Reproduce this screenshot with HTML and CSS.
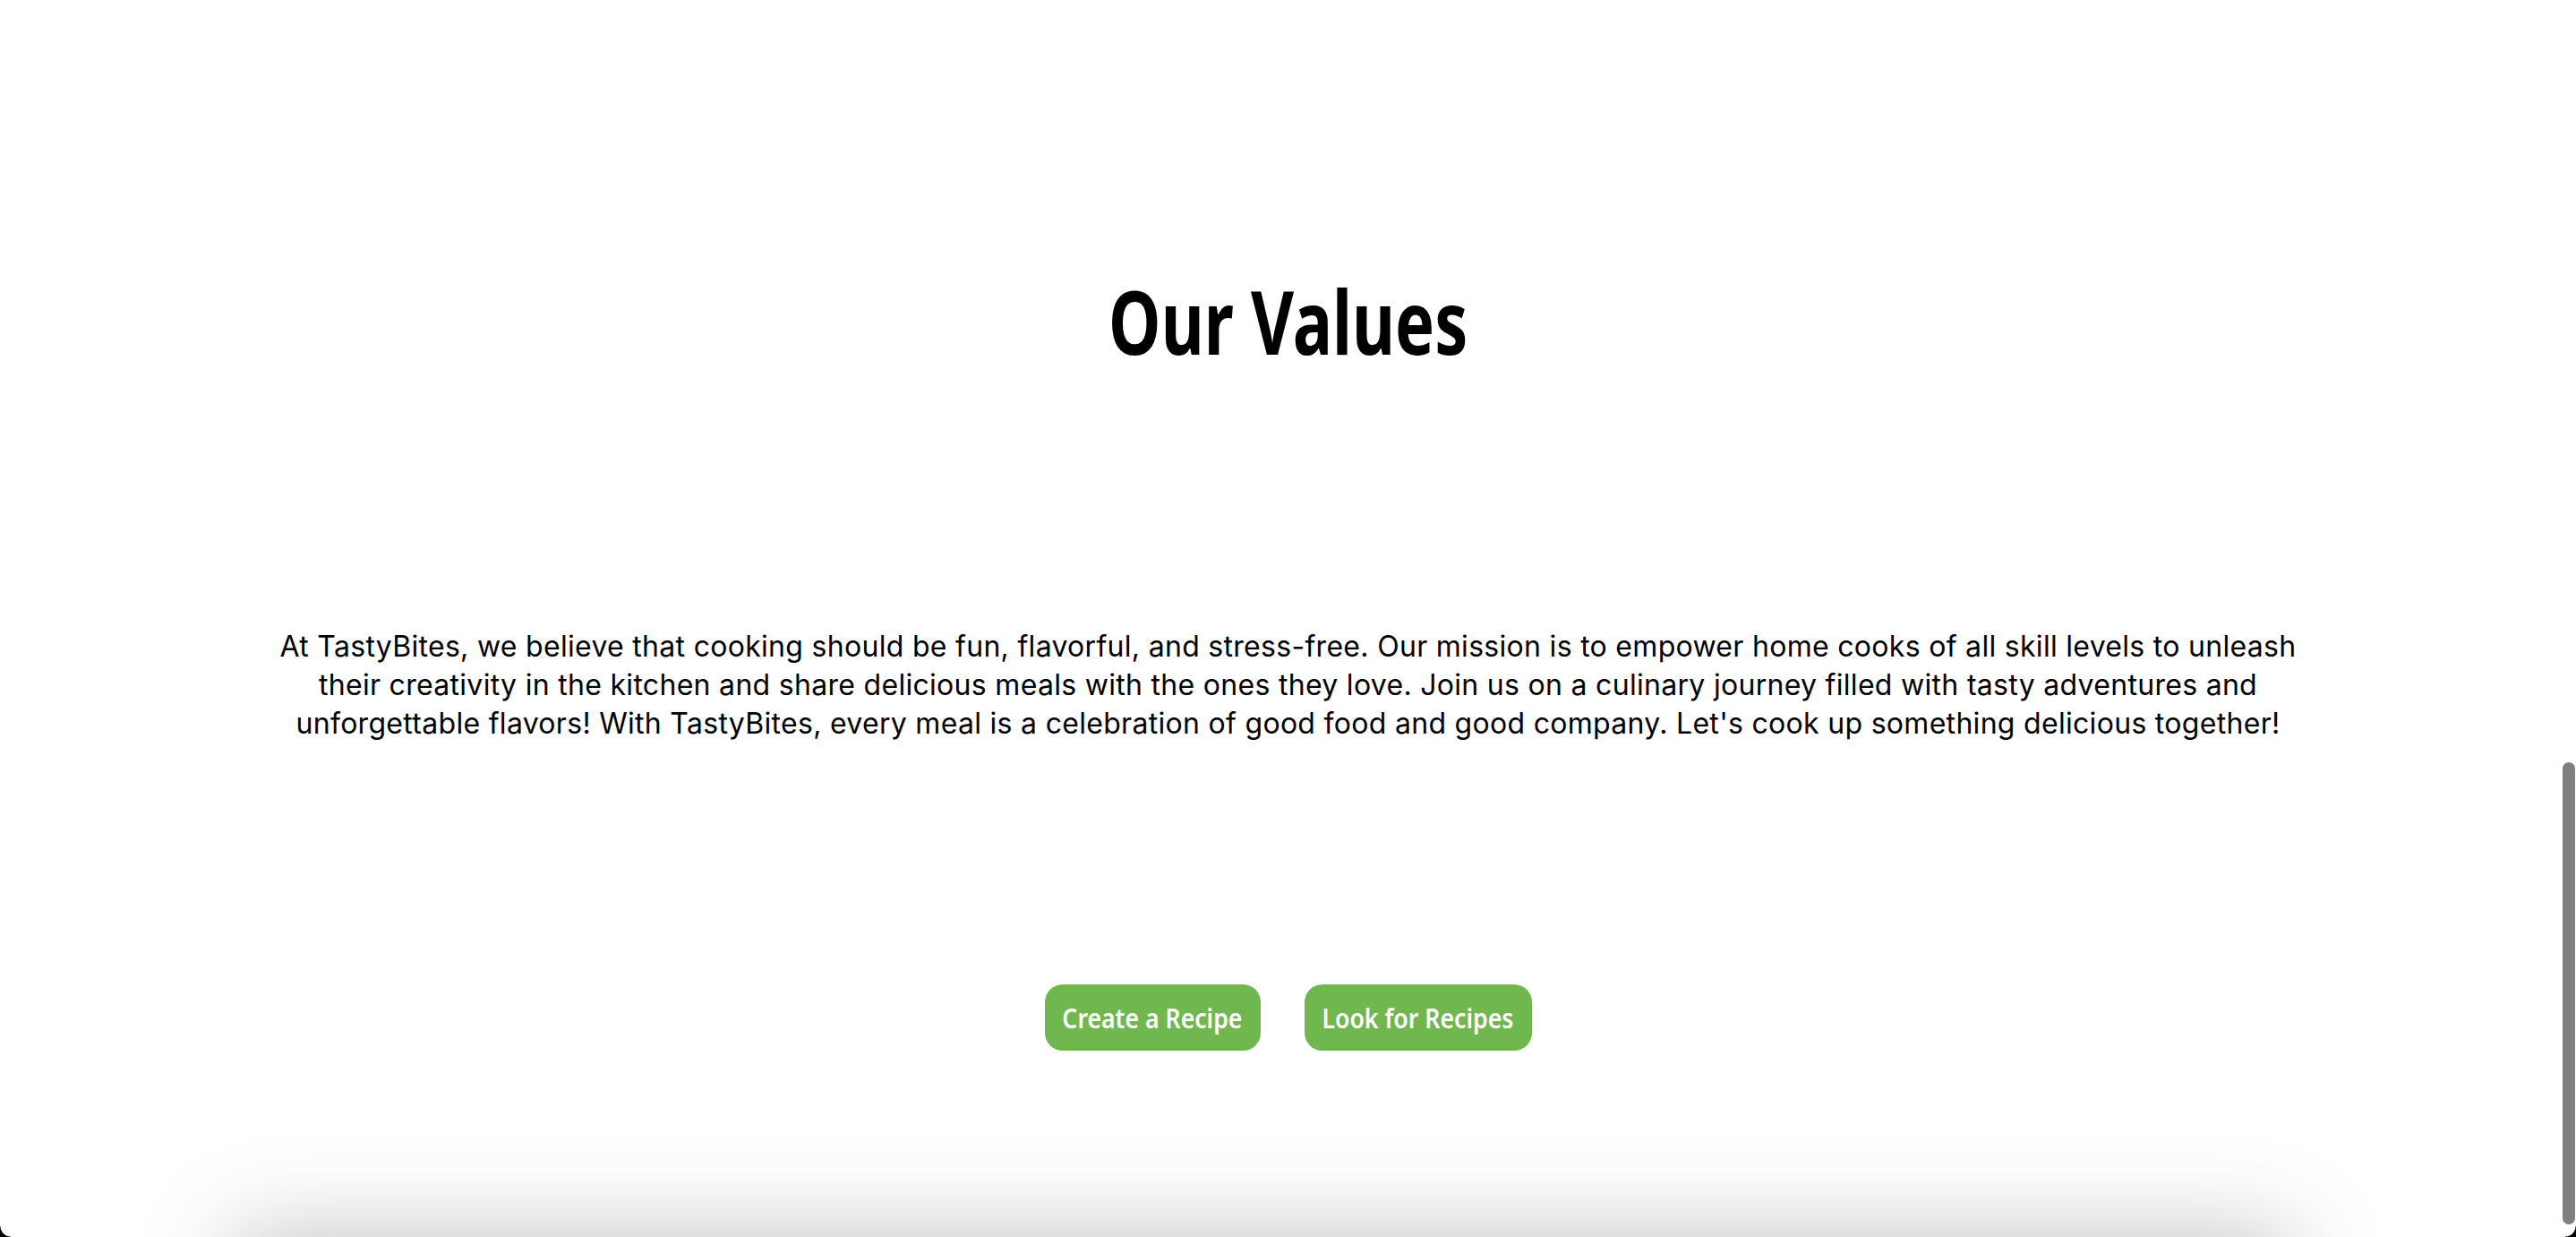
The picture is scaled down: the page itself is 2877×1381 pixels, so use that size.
FILE: index.html
```html
<!DOCTYPE html>
<html lang="en">
<head>
<meta charset="utf-8">
<title>Our Values - TastyBites</title>
<link rel="stylesheet" href="styles.css">
</head>
<body>
<div class="page">
  <section class="values">
    <h1 class="values-title">Our Values</h1>
    <p class="values-text">At TastyBites, we believe that cooking should be fun, flavorful, and stress-free. Our mission is to empower home cooks of all skill levels to unleash their creativity in the kitchen and share delicious meals with the ones they love. Join us on a culinary journey filled with tasty adventures and unforgettable flavors! With TastyBites, every meal is a celebration of good food and good company. Let's cook up something delicious together!</p>
    <div class="actions">
      <a class="btn btn-create" href="#"><span class="btn-label">Create a Recipe</span></a>
      <a class="btn btn-browse" href="#"><span class="btn-label">Look for Recipes</span></a>
    </div>
  </section>
  <div class="next-card"></div>
</div>
<div class="scroll-thumb"></div>
<div class="corner corner-left"></div>
<div class="corner corner-right"></div>
</body>
</html>
```

FILE: styles.css
```css
html, body {
  margin: 0;
  padding: 0;
  background: #ffffff;
  overflow: hidden;
}

.page {
  height: 1381px;
  overflow: hidden;
  display: flex;
  flex-direction: column;
  align-items: center;
}

.values {
  width: 100%;
  display: flex;
  flex-direction: column;
  align-items: center;
  padding-top: 309px;
  height: 1381px;
  box-sizing: border-box;
  flex-shrink: 0;
}

.values-title {
  margin: 0;
  font-family: "Noto Sans", sans-serif;
  font-weight: 700;
  font-size: 98px;
  line-height: 98px;
  color: #000;
  transform: scaleX(0.755);
}

.values-text {
  margin: 293px 0 0;
  width: 80%;
  font-family: Inter, Roboto, sans-serif;
  font-size: 32px;
  letter-spacing: 0.3px;
  line-height: 43px;
  text-align: center;
  color: #000;
}

.actions {
  margin-top: 270px;
  display: flex;
  gap: 49px;
}

.btn {
  display: inline-flex;
  align-items: center;
  justify-content: center;
  height: 74px;
  border-radius: 20px;
  background: #71b750;
  color: #ffffff;
  text-decoration: none;
  font-family: "Noto Sans", sans-serif;
  font-weight: 600;
  font-size: 31px;
  white-space: nowrap;
}

.btn-create {
  width: 241px;
}

.btn-browse {
  width: 254px;
}

.btn-label {
  display: inline-block;
  transform: scaleX(0.86);
}

.next-card {
  flex-shrink: 0;
  width: 2300px;
  height: 400px;
  margin-left: -60px;
  background: #ffffff;
  box-shadow: 0 0 100px rgba(0, 0, 0, 0.25);
}

.scroll-thumb {
  position: fixed;
  top: 851px;
  right: 1px;
  width: 14px;
  height: 516px;
  border-radius: 7px;
  background: #7f7f7f;
}

.corner {
  position: fixed;
  bottom: 0;
  width: 12px;
  height: 12px;
}

.corner-left {
  left: 0;
  background: radial-gradient(circle at 12px 0, transparent 11px, #000 12px);
}

.corner-right {
  right: 0;
  background: radial-gradient(circle at 0 0, transparent 11px, #000 12px);
}
```
